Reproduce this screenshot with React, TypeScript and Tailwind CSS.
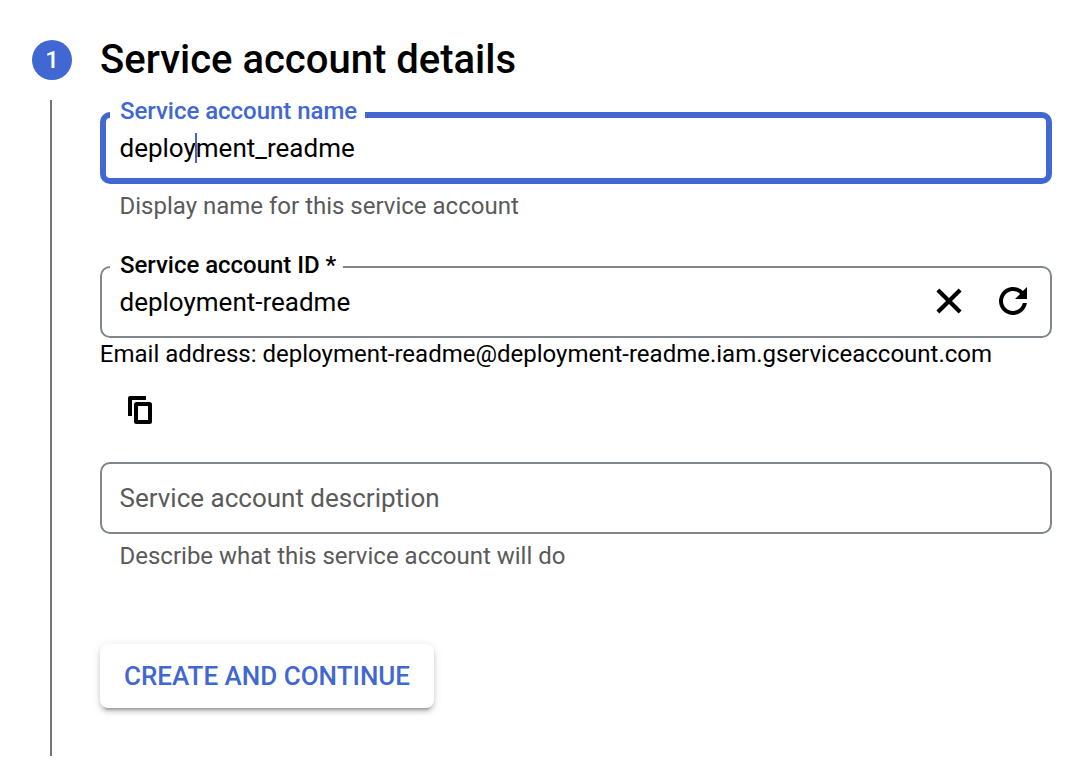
import type { ReactNode } from 'react';

function OutlinedField({
  label,
  focused = false,
  children,
}: {
  label?: ReactNode;
  focused?: boolean;
  children: ReactNode;
}) {
  const border = focused ? 'border-[6px] border-[#4067d2] pl-[13.5px]' : 'border-2 border-[#80868b] pl-[17.5px]';
  return (
    <div className={`relative flex h-[72px] items-center rounded-[10px] ${border}`}>
      {label}
      {children}
    </div>
  );
}

function CloseIcon() {
  return (
    <svg width="26" height="26" viewBox="0 0 26 26" fill="none" stroke="#000" strokeWidth="4.2">
      <path d="M1.9 1.9 24.1 24.1M24.1 1.9 1.9 24.1" />
    </svg>
  );
}

function RefreshIcon() {
  return (
    <svg width="28" height="28" viewBox="0 0 28 28" fill="#000">
      <path d="M23.9 4.1A14 14 0 1 0 27.86 16H23.8A10 10 0 1 1 21.07 6.93L16 12H28V0Z" />
    </svg>
  );
}

function CopyIcon() {
  return (
    <svg width="24" height="28" viewBox="0 0 24 28" fill="none">
      <path d="M18 0v4H4v16H0V2Q0 0 2 0Z" fill="#000" />
      <rect x="8" y="8" width="14" height="18" rx=".5" stroke="#000" strokeWidth="4" />
    </svg>
  );
}

export default function App() {
  return (
    <div className="flex h-[760px] w-[1068px] bg-white pl-8 font-['Roboto',sans-serif] text-black">
      <div className="flex w-10 flex-col pt-10">
        <div className="flex h-10 w-10 items-center justify-center rounded-full bg-[#4067d2] text-[24px] font-medium text-white">
          1
        </div>
        <div className="mt-5 ml-[18px] h-[656px] w-[2px] bg-[#757575]" />
      </div>
      <main className="ml-7 flex w-[952px] flex-col pt-9">
        <h2 className="h-12 text-[40px] leading-[48px] font-medium whitespace-nowrap">
          <span>Service account details</span>
        </h2>
        <div className="mt-7">
          <OutlinedField
            focused
            label={
              <label className="absolute -top-[23px] left-[4px] flex h-8 w-[255px] items-center bg-white pl-[10px] text-[24px] font-medium tracking-[-0.03px] whitespace-nowrap text-[#4067d2]">
                <span>Service account name</span>
              </label>
            }
          >
            <span className="flex items-center text-[26px] leading-8">
              <span>deploy</span>
              <span className="z-10 -mr-[1.5px] -ml-[0.5px] h-[30px] w-[2px] bg-[#4067d2]" />
              <span>ment_readme</span>
            </span>
          </OutlinedField>
        </div>
        <p className="mt-2 ml-[19.5px] h-7 text-[24px] leading-7 text-[#5a5a5a]">
          <span>Display name for this service account</span>
        </p>
        <div className="mt-[46px]">
          <OutlinedField
            label={
              <label className="absolute -top-[19px] left-[8px] flex h-8 w-[233px] items-center bg-white pl-[10px] text-[24px] font-medium tracking-[-0.03px] whitespace-nowrap">
                <span>Service account ID *</span>
              </label>
            }
          >
            <span className="flex-1 text-[26px] leading-8">
              <span>deployment-readme</span>
            </span>
            <span className="mb-[2px] flex items-center gap-[37px] pr-[23px]">
              <CloseIcon />
              <RefreshIcon />
            </span>
          </OutlinedField>
        </div>
        <p className="mt-[2px] -ml-[0.2px] h-7 text-[24px] leading-7 whitespace-nowrap">
          <span>Email address: deployment-readme@deployment-readme.iam.gserviceaccount.com</span>
        </p>
        <div className="mt-7 ml-7 h-7">
          <CopyIcon />
        </div>
        <div className="mt-[38px]">
          <OutlinedField>
            <span className="text-[26px] leading-8 text-[#5a5a5a]">Service account description</span>
          </OutlinedField>
        </div>
        <p className="mt-2 ml-[19.5px] h-7 text-[24px] leading-7 text-[#5a5a5a]">
          <span>Describe what this service account will do</span>
        </p>
        <button className="mt-[74px] flex h-16 w-[334px] items-center justify-center rounded-lg bg-white text-[26px] font-medium whitespace-nowrap text-[#4067d2] shadow-[0_6px_2px_-4px_rgba(0,0,0,0.2),0_4px_4px_0_rgba(0,0,0,0.14),0_2px_10px_0_rgba(0,0,0,0.12)]">
          <span>CREATE AND CONTINUE</span>
        </button>
      </main>
    </div>
  );
}
